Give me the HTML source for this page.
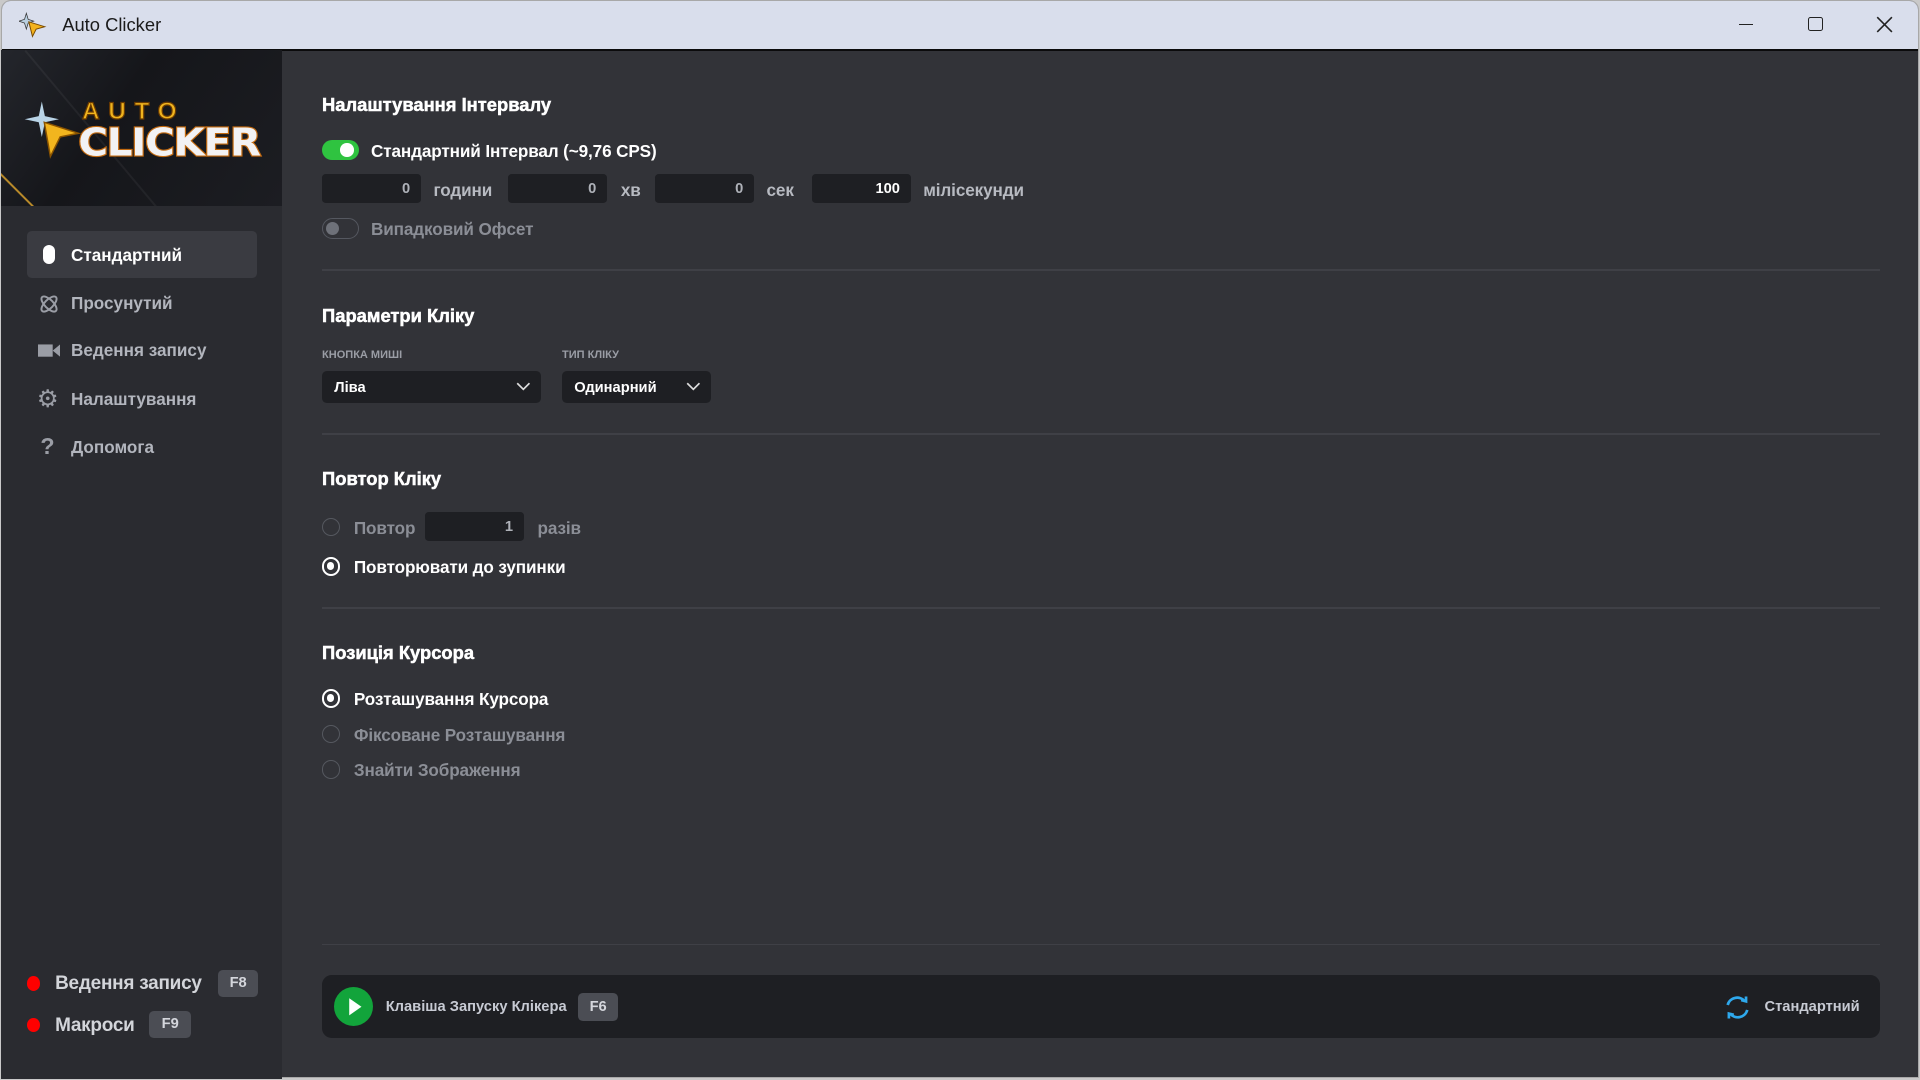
<!DOCTYPE html>
<html><head><meta charset="utf-8"><style>
html,body{margin:0;padding:0;}
body{width:1568px;height:882px;zoom:1.2244898;background:#c9c9c9;position:relative;overflow:hidden;font-family:"Liberation Sans","DejaVu Sans",sans-serif;}
.a{position:absolute;}
.win{left:1px;top:0;width:1566px;height:880px;background:#323338;border-radius:8px 8px 0 0;overflow:hidden;border:1px solid #a8a8a8;box-sizing:border-box;}
.tb{left:0;top:0;width:100%;height:39px;background:#d9deec;border-bottom:2px solid #0b0b0c;}
.side{left:1px;top:41px;width:229px;height:840px;background:#2a2b30;}
.logo{left:1px;top:41px;width:229px;height:127px;background:linear-gradient(125deg,#24262c 0%,#15161a 40%,#1c1d22 100%);overflow:hidden;}
.h{color:#fff;font-weight:bold;font-size:15px;left:263px;-webkit-text-stroke:.4px #fff;}
.t{font-weight:bold;font-size:14px;color:#fff;letter-spacing:-0.1px;}
.g{color:#8b8e96;}
.in{background:#1e1f23;border-radius:3px;height:24px;color:#aeb1b8;font-size:12px;font-weight:bold;text-align:right;line-height:26px;box-sizing:border-box;padding-right:9px;}
.sep{left:263px;width:1272px;height:1px;background:#3f4046;}
.rad{width:15px;height:15px;border:1.5px solid #55585f;border-radius:50%;box-sizing:border-box;left:263px;}
.rad.on{border:2px solid #fff;}
.rad.on::after{content:"";position:absolute;left:2.5px;top:2.5px;width:6px;height:6px;border-radius:50%;background:#fff;}
.nav{left:58px;font-size:14px;font-weight:bold;color:#b2b5bd;}
.badge{background:#4b4d54;color:#d4d6dc;font-size:12px;font-weight:bold;border-radius:4px;text-align:center;}
.lbl{font-size:9px;font-weight:bold;color:#9a9da5;}
.sel{background:#1e1f23;border-radius:4px;height:26px;top:303px;color:#fff;font-size:12px;font-weight:bold;line-height:28px;padding-left:10px;box-sizing:border-box;}
</style></head><body>
<div class="a win">
<div class="a tb">
<svg class="a" style="left:14px;top:9px" width="24" height="22" viewBox="0 0 24 22"><path d="M6 1 L7.5 6 L12 7.5 L7.5 9 L6 14 L4.5 9 L0 7.5 L4.5 6Z" fill="#b9cfe0" stroke="#333" stroke-width=".6"/><path d="M8 8 L21 12 L14 14 L11 20Z" fill="#f3b21c" stroke="#7a4b00" stroke-width=".8"/></svg>
<div class="a" style="left:49px;top:11px;font-size:15px;color:#1b1b1b">Auto Clicker</div>
<div class="a" style="left:1418px;top:19px;width:12px;height:1px;background:#222"></div>
<div class="a" style="left:1475px;top:13px;width:10px;height:10px;border:1.2px solid #222;border-radius:2px"></div>
<svg class="a" style="left:1530px;top:12px" width="14" height="14"><path d="M1 1L13 13M13 1L1 13" stroke="#222" stroke-width="1.3"/></svg>
</div>
</div>
<div class="a side"></div>
<div class="a logo">
<div class="a" style="left:20px;top:0;width:600px;height:2px;background:rgba(255,255,255,.05);transform:rotate(50deg);transform-origin:0 0"></div>
<div class="a" style="left:0;top:100px;width:40px;height:1.5px;background:#b88a2a;transform:rotate(45deg);transform-origin:0 0"></div>
<svg class="a" style="left:16px;top:40px" width="50" height="50" viewBox="0 0 50 50"><path d="M17 2 L19.5 14 L31 16.5 L19.5 19 L17 31 L14.5 19 L3 16.5 L14.5 14Z" fill="#b8d3e6"/><path d="M19 19 L47 28 L32 31 L24 47Z" fill="#f2b51e" stroke="#8a5300" stroke-width="1.2"/></svg>
<div class="a" style="left:66px;top:39px;font-size:20px;font-weight:900;color:#f0b41e;letter-spacing:7px;-webkit-text-stroke:1px #6b3b00">AUTO</div>
<div class="a" style="left:63px;top:55px;font-size:33px;font-weight:900;color:#f2f2f4;letter-spacing:-1px;-webkit-text-stroke:2px #c26a10;paint-order:stroke fill;font-family:'DejaVu Sans',sans-serif;transform:scaleY(.95)">CLICKER</div>
</div>
<div class="a" style="left:22px;top:189px;width:188px;height:38px;background:#3a3b41;border-radius:4px"></div>
<div class="a" style="left:35px;top:200px;width:10px;height:16px;background:#fff;border-radius:5px"></div>
<div class="a nav" style="top:200px;color:#fff">Стандартний</div>
<svg class="a" style="left:31px;top:239px" width="18" height="18" viewBox="0 0 18 18" fill="none" stroke="#9a9da5" stroke-width="1.6"><ellipse cx="9" cy="9" rx="8" ry="3.5" transform="rotate(45 9 9)"/><ellipse cx="9" cy="9" rx="8" ry="3.5" transform="rotate(-45 9 9)"/></svg>
<div class="a nav" style="top:239px">Просунутий</div>
<svg class="a" style="left:31px;top:279px" width="18" height="14"><rect x="0" y="2" width="12" height="10" fill="#9a9da5"/><path d="M12 7 L18 2 L18 12Z" fill="#9a9da5"/></svg>
<div class="a nav" style="top:278px">Ведення запису</div>
<div class="a" style="left:30px;top:314px;font-size:20px;color:#9a9da5">⚙</div>
<div class="a nav" style="top:318px">Налаштування</div>
<div class="a" style="left:33px;top:354px;font-size:19px;font-weight:bold;color:#9a9da5">?</div>
<div class="a nav" style="top:357px">Допомога</div>
<div class="a" style="left:22px;top:797px;width:11px;height:12px;border-radius:50%;background:#f00"></div>
<div class="a" style="left:45px;top:795px;font-size:15.5px;font-weight:bold;color:#d3d5da;letter-spacing:-0.2px">Ведення запису</div>
<div class="a badge" style="left:178px;top:792px;width:33px;height:22px;line-height:22px">F8</div>
<div class="a" style="left:22px;top:831px;width:11px;height:12px;border-radius:50%;background:#f00"></div>
<div class="a" style="left:45px;top:829px;font-size:15.5px;font-weight:bold;color:#d3d5da;letter-spacing:-0.2px">Макроси</div>
<div class="a badge" style="left:122px;top:826px;width:34px;height:22px;line-height:22px">F9</div>
<div class="a h" style="top:77px">Налаштування Інтервалу</div>
<div class="a" style="left:263px;top:114px;width:30px;height:17px;border-radius:9px;background:#2fc340"></div>
<div class="a" style="left:278px;top:117px;width:11px;height:11px;border-radius:50%;background:#fff"></div>
<div class="a t" style="left:303px;top:115px">Стандартний Інтервал (~9,76 CPS)</div>
<div class="a in" style="left:263px;top:142px;width:81px">0</div><div class="a t" style="left:354px;top:147px;color:#b7bac1">години</div>
<div class="a in" style="left:415px;top:142px;width:81px">0</div><div class="a t" style="left:507px;top:147px;color:#b7bac1">хв</div>
<div class="a in" style="left:535px;top:142px;width:81px">0</div><div class="a t" style="left:626px;top:147px;color:#b7bac1">сек</div>
<div class="a in" style="left:663px;top:142px;width:81px;color:#fff">100</div><div class="a t" style="left:754px;top:147px;color:#b7bac1">мілісекунди</div>
<div class="a" style="left:263px;top:178px;width:30px;height:17px;border-radius:9px;border:1.5px solid #555860;box-sizing:border-box"></div>
<div class="a" style="left:266px;top:181px;width:11px;height:11px;border-radius:50%;background:#6e7179"></div>
<div class="a t g" style="left:303px;top:179px">Випадковий Офсет</div>
<div class="a sep" style="top:220px"></div>
<div class="a h" style="top:249px">Параметри Кліку</div>
<div class="a lbl" style="left:263px;top:285px">КНОПКА МИШІ</div>
<div class="a lbl" style="left:459px;top:285px">ТИП КЛІКУ</div>
<div class="a sel" style="left:263px;width:179px">Ліва</div>
<div class="a sel" style="left:459px;width:122px">Одинарний</div>
<svg class="a" style="left:421px;top:312px" width="12" height="8"><path d="M1 1L6 6L11 1" stroke="#ddd" stroke-width="1.4" fill="none"/></svg>
<svg class="a" style="left:560px;top:312px" width="12" height="8"><path d="M1 1L6 6L11 1" stroke="#ddd" stroke-width="1.4" fill="none"/></svg>
<div class="a sep" style="top:354px"></div>
<div class="a h" style="top:382px">Повтор Кліку</div>
<div class="a rad" style="top:423px"></div>
<div class="a t g" style="left:289px;top:423px">Повтор</div>
<div class="a in" style="left:347px;top:418px;width:81px">1</div>
<div class="a t g" style="left:439px;top:423px">разів</div>
<div class="a rad on" style="top:455px"></div>
<div class="a t" style="left:289px;top:455px">Повторювати до зупинки</div>
<div class="a sep" style="top:496px"></div>
<div class="a h" style="top:524px">Позиція Курсора</div>
<div class="a rad on" style="top:563px"></div><div class="a t" style="left:289px;top:563px">Розташування Курсора</div>
<div class="a rad" style="top:592px"></div><div class="a t g" style="left:289px;top:592px">Фіксоване Розташування</div>
<div class="a rad" style="top:621px"></div><div class="a t g" style="left:289px;top:621px">Знайти Зображення</div>
<div class="a sep" style="top:771px"></div>
<div class="a" style="left:263px;top:796px;width:1272px;height:52px;background:#1e1f23;border-radius:8px"></div>
<div class="a" style="left:273px;top:806px;width:32px;height:32px;border-radius:50%;background:#12a43b"></div>
<svg class="a" style="left:284px;top:814px" width="12" height="16"><path d="M1 1L11 8L1 15Z" fill="#fff"/></svg>
<div class="a" style="left:315px;top:816px;font-size:12px;font-weight:bold;color:#c7cad3">Клавіша Запуску Клікера</div>
<div class="a badge" style="left:472px;top:811px;width:33px;height:23px;line-height:23px">F6</div>
<svg class="a" style="left:1408px;top:812px" width="22" height="22" viewBox="0 0 22 22" fill="none" stroke="#2ea8ec" stroke-width="2.2"><path d="M3 9 A8 8 0 0 1 17 6"/><path d="M19 13 A8 8 0 0 1 5 16"/><path d="M14 5 L18 6 L18 2" /><path d="M8 17 L4 16 L4 20"/></svg>
<div class="a" style="left:1441px;top:816px;font-size:12px;font-weight:bold;color:#c7cad3">Стандартний</div>
</body></html>
